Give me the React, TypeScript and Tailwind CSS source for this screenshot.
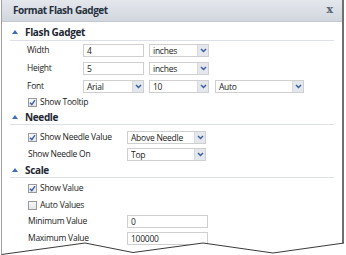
import React from "react";

const Chevron = () => (
  <svg width="7" height="5" viewBox="0 0 7 5">
    <path d="M1 1 L3.5 3.5 L6 1" fill="none" stroke="#3b5ea6" strokeWidth="1.5" />
  </svg>
);

const txt = "text-[8.5px] tracking-[-0.25px] text-[#222]";

const Select = ({ text, w }: { text: string; w: string }) => (
  <div className={`flex h-[13px] items-stretch border border-[#cfcfcf] bg-white ${w}`}>
    <div className="flex-1 pl-[3px] text-[8.5px] leading-[11px] tracking-[-0.25px] text-[#222]">{text}</div>
    <div className="flex w-[11px] items-center justify-center border-l border-[#d6d9de] bg-[#e4e7ec]">
      <Chevron />
    </div>
  </div>
);

const Input = ({ text, w }: { text: string; w: string }) => (
  <div className={`h-[13px] border border-[#cfcfcf] bg-white pl-[3px] text-[8.5px] leading-[11px] tracking-[-0.25px] text-[#222] ${w}`}>{text}</div>
);

const Check = ({ checked }: { checked: boolean }) => (
  <div className="flex h-[9px] w-[9px] items-center justify-center border border-[#9a9a9a] bg-gradient-to-b from-[#f7f8fa] to-[#e3e6ea]">
    {checked && (
      <svg width="7" height="7" viewBox="0 0 7 7">
        <path d="M1 3.8 L2.8 5.6 L6 1.2" fill="none" stroke="#3b5ea6" strokeWidth="1.4" />
      </svg>
    )}
  </div>
);

const Heading = ({ text, h, pt }: { text: string; h: string; pt: string }) => (
  <div className={`mx-[8px] flex items-center border-b border-[#dde1e7] ${h} ${pt}`}>
    <svg width="6" height="4" viewBox="0 0 6 4" className="ml-[2px] mr-[7px]">
      <path d="M0 4 L3 0 L6 4 Z" fill="#3f6eb5" />
    </svg>
    <span className="text-[10px] font-bold tracking-[-0.35px] text-[#1d2733]">{text}</span>
  </div>
);

const Label = ({ text, w }: { text: string; w: string }) => (
  <div className={`${txt} ${w}`}>{text}</div>
);

export default function App() {
  return (
    <div className="relative h-[255px] w-[346px] overflow-hidden bg-white font-['Open_Sans','Noto_Sans',sans-serif]">
      <div className="ml-[1px] h-[255px] w-[343px] border-l border-r-2 border-l-[#a0a0a0] border-r-[#6f6f6f] bg-white">
        <div className="flex h-[22px] items-center justify-between border-b border-[#c3c8d0] bg-gradient-to-b from-[#e4e7ec] to-[#d2d7df] pl-[11px] pr-[9px]">
          <span className="text-[10px] font-bold tracking-[-0.45px] text-[#26313d]">Format Flash Gadget</span>
          <span className="font-['DejaVu_Serif',serif] text-[11px] font-bold text-[#5b6570]">x</span>
        </div>

        <Heading text="Flash Gadget" h="h-[19px]" pt="pt-[2px]" />
        <div className="flex h-[18px] items-center pl-[25px]">
          <Label text="Width" w="w-[56px]" />
          <Input text="4" w="w-[61px]" />
          <div className="w-[5px]" />
          <Select text="inches" w="w-[60px]" />
        </div>
        <div className="flex h-[18px] items-center pl-[25px]">
          <Label text="Height" w="w-[56px]" />
          <Input text="5" w="w-[61px]" />
          <div className="w-[5px]" />
          <Select text="inches" w="w-[60px]" />
        </div>
        <div className="flex h-[18px] items-center pl-[25px]">
          <Label text="Font" w="w-[56px]" />
          <Select text="Arial" w="w-[61px]" />
          <div className="w-[5px]" />
          <Select text="10" w="w-[60px]" />
          <div className="w-[6px]" />
          <Select text="Auto" w="w-[89px]" />
        </div>
        <div className="flex h-[15px] items-center gap-[3px] pl-[26px]">
          <Check checked />
          <span className={txt}>Show Tooltip</span>
        </div>

        <Heading text="Needle" h="h-[15px]" pt="pt-0" />
        <div className="h-[3px]" />
        <div className="flex h-[18px] items-center pl-[26px]">
          <div className="flex w-[99px] items-center gap-[3px]">
            <Check checked />
            <span className={txt}>Show Needle Value</span>
          </div>
          <Select text="Above Needle" w="w-[79px]" />
        </div>
        <div className="flex h-[17px] items-center pl-[26px]">
          <Label text="Show Needle On" w="w-[99px]" />
          <Select text="Top" w="w-[79px]" />
        </div>

        <Heading text="Scale" h="h-[15px]" pt="pt-0" />
        <div className="h-[2px]" />
        <div className="flex h-[17px] items-center gap-[3px] pl-[26px]">
          <Check checked />
          <span className={txt}>Show Value</span>
        </div>
        <div className="flex h-[16px] items-center gap-[3px] pl-[26px]">
          <Check checked={false} />
          <span className={txt}>Auto Values</span>
        </div>
        <div className="flex h-[17px] items-center pl-[26px]">
          <Label text="Minimum Value" w="w-[99px]" />
          <Input text="0" w="w-[81px]" />
        </div>
        <div className="flex h-[17px] items-center pl-[26px]">
          <Label text="Maximum Value" w="w-[99px]" />
          <Input text="100000" w="w-[81px]" />
        </div>
      </div>

      <svg className="absolute left-0 top-0" width="346" height="255" viewBox="0 0 346 255">
        <path d="M0 256 L1.5 254.5 L85 243 L133 252.5 L203 243 L273 253 L344 243 L346 243 L346 256 Z" fill="#ffffff" />
        <path d="M1.5 254.5 L85 243 L133 252.5 L203 243 L273 253 L344 243" fill="none" stroke="#3a3a3a" strokeWidth="1" />
      </svg>
    </div>
  );
}
